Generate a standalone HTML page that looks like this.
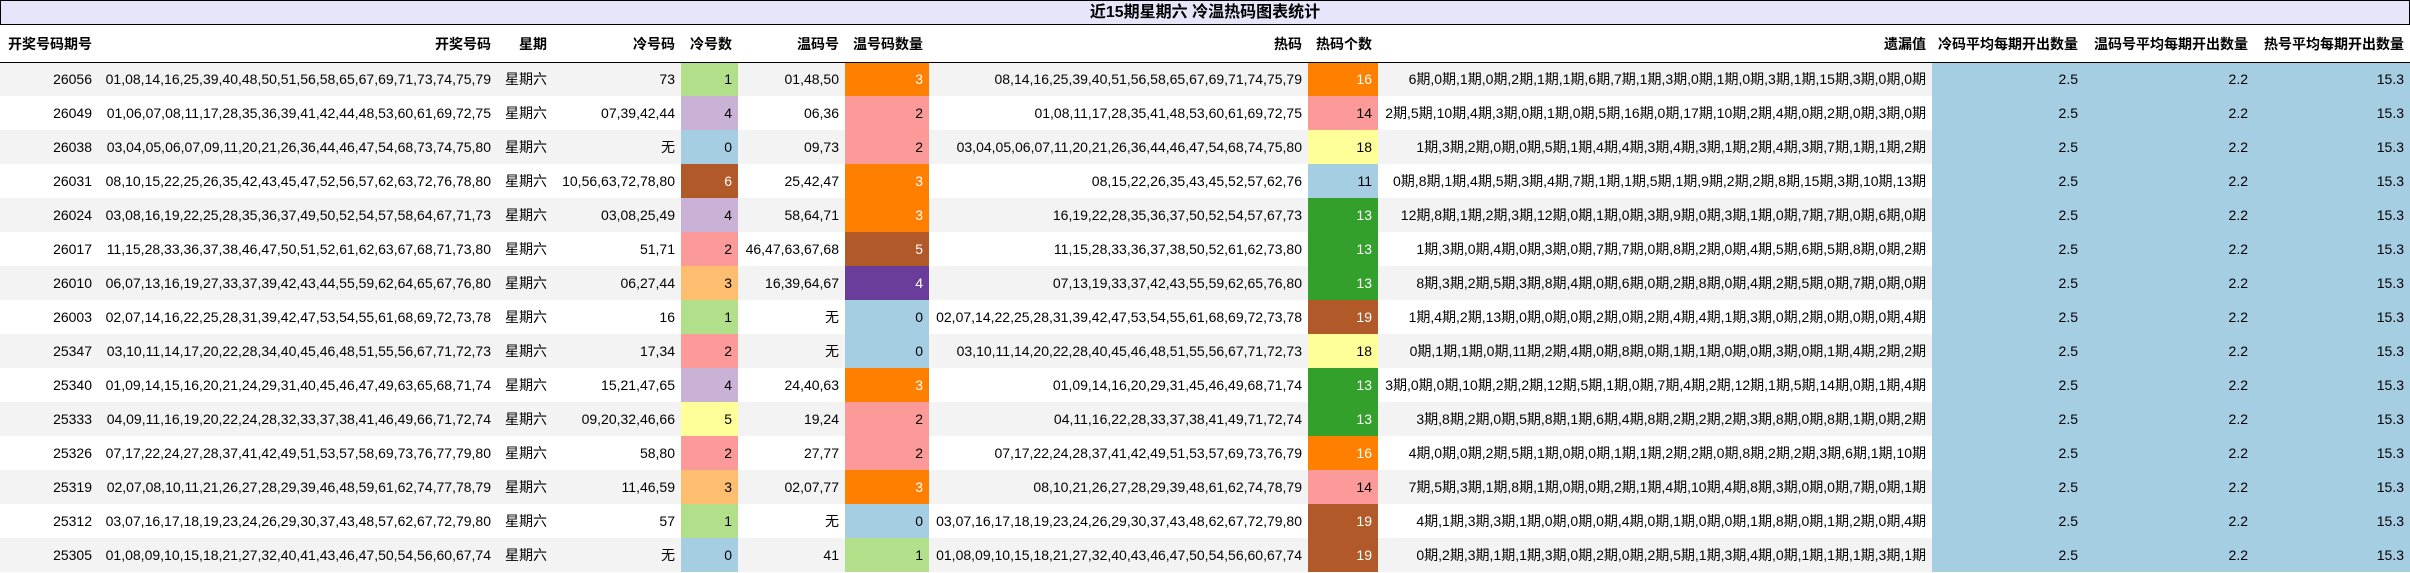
<!DOCTYPE html>
<html><head><meta charset="utf-8"><style>
*{margin:0;padding:0;box-sizing:border-box}
body{width:2410px;height:573px;background:#fff;font-family:"Liberation Sans","Noto Sans CJK SC",sans-serif;font-size:14px;color:#000;overflow:hidden}
.title{height:25px;border:1px solid #000;background:#e6e6fa;text-align:center;font-weight:bold;font-size:16px;line-height:23px}
table{border-collapse:collapse;table-layout:fixed;width:2410px}
th,td{text-align:right;padding:0 6px 0 0;white-space:nowrap;overflow:hidden}
th{height:37px;font-weight:bold;border-bottom:1px solid #000;padding-top:2px}
td{height:34px}
tbody tr:nth-child(odd) td{background:#f3f3f3}
tbody tr td.b{background:#a6cee3}
td.w{color:#fff}
</style></head><body>
<div class="title">近15期星期六 冷温热码图表统计</div>
<table>
<colgroup><col style="width:98px"><col style="width:399px"><col style="width:56px"><col style="width:128px"><col style="width:57px"><col style="width:107px"><col style="width:84px"><col style="width:379px"><col style="width:70px"><col style="width:554px"><col style="width:152px"><col style="width:170px"><col style="width:156px"></colgroup>
<thead><tr><th>开奖号码期号</th><th>开奖号码</th><th>星期</th><th>冷号码</th><th>冷号数</th><th>温码号</th><th>温号码数量</th><th>热码</th><th>热码个数</th><th>遗漏值</th><th>冷码平均每期开出数量</th><th>温码号平均每期开出数量</th><th>热号平均每期开出数量</th></tr></thead>
<tbody>
<tr><td>26056</td><td>01,08,14,16,25,39,40,48,50,51,56,58,65,67,69,71,73,74,75,79</td><td>星期六</td><td>73</td><td style="background:#b2df8a!important">1</td><td>01,48,50</td><td class="w" style="background:#ff7f00!important">3</td><td>08,14,16,25,39,40,51,56,58,65,67,69,71,74,75,79</td><td class="w" style="background:#ff7f00!important">16</td><td>6期,0期,1期,0期,2期,1期,1期,6期,7期,1期,3期,0期,1期,0期,3期,1期,15期,3期,0期,0期</td><td class="b">2.5</td><td class="b">2.2</td><td class="b">15.3</td></tr>
<tr><td>26049</td><td>01,06,07,08,11,17,28,35,36,39,41,42,44,48,53,60,61,69,72,75</td><td>星期六</td><td>07,39,42,44</td><td style="background:#cab2d6">4</td><td>06,36</td><td style="background:#fb9a99">2</td><td>01,08,11,17,28,35,41,48,53,60,61,69,72,75</td><td style="background:#fb9a99">14</td><td>2期,5期,10期,4期,3期,0期,1期,0期,5期,16期,0期,17期,10期,2期,4期,0期,2期,0期,3期,0期</td><td class="b">2.5</td><td class="b">2.2</td><td class="b">15.3</td></tr>
<tr><td>26038</td><td>03,04,05,06,07,09,11,20,21,26,36,44,46,47,54,68,73,74,75,80</td><td>星期六</td><td>无</td><td style="background:#a6cee3!important">0</td><td>09,73</td><td style="background:#fb9a99!important">2</td><td>03,04,05,06,07,11,20,21,26,36,44,46,47,54,68,74,75,80</td><td style="background:#ffff99!important">18</td><td>1期,3期,2期,0期,0期,5期,1期,4期,4期,3期,4期,3期,1期,2期,4期,3期,7期,1期,1期,2期</td><td class="b">2.5</td><td class="b">2.2</td><td class="b">15.3</td></tr>
<tr><td>26031</td><td>08,10,15,22,25,26,35,42,43,45,47,52,56,57,62,63,72,76,78,80</td><td>星期六</td><td>10,56,63,72,78,80</td><td class="w" style="background:#b15928">6</td><td>25,42,47</td><td class="w" style="background:#ff7f00">3</td><td>08,15,22,26,35,43,45,52,57,62,76</td><td style="background:#a6cee3">11</td><td>0期,8期,1期,4期,5期,3期,4期,7期,1期,1期,5期,1期,9期,2期,2期,8期,15期,3期,10期,13期</td><td class="b">2.5</td><td class="b">2.2</td><td class="b">15.3</td></tr>
<tr><td>26024</td><td>03,08,16,19,22,25,28,35,36,37,49,50,52,54,57,58,64,67,71,73</td><td>星期六</td><td>03,08,25,49</td><td style="background:#cab2d6!important">4</td><td>58,64,71</td><td class="w" style="background:#ff7f00!important">3</td><td>16,19,22,28,35,36,37,50,52,54,57,67,73</td><td class="w" style="background:#33a02c!important">13</td><td>12期,8期,1期,2期,3期,12期,0期,1期,0期,3期,9期,0期,3期,1期,0期,7期,7期,0期,6期,0期</td><td class="b">2.5</td><td class="b">2.2</td><td class="b">15.3</td></tr>
<tr><td>26017</td><td>11,15,28,33,36,37,38,46,47,50,51,52,61,62,63,67,68,71,73,80</td><td>星期六</td><td>51,71</td><td style="background:#fb9a99">2</td><td>46,47,63,67,68</td><td class="w" style="background:#b15928">5</td><td>11,15,28,33,36,37,38,50,52,61,62,73,80</td><td class="w" style="background:#33a02c">13</td><td>1期,3期,0期,4期,0期,3期,0期,7期,7期,0期,8期,2期,0期,4期,5期,6期,5期,8期,0期,2期</td><td class="b">2.5</td><td class="b">2.2</td><td class="b">15.3</td></tr>
<tr><td>26010</td><td>06,07,13,16,19,27,33,37,39,42,43,44,55,59,62,64,65,67,76,80</td><td>星期六</td><td>06,27,44</td><td style="background:#fdbf6f!important">3</td><td>16,39,64,67</td><td class="w" style="background:#6a3d9a!important">4</td><td>07,13,19,33,37,42,43,55,59,62,65,76,80</td><td class="w" style="background:#33a02c!important">13</td><td>8期,3期,2期,5期,3期,8期,4期,0期,6期,0期,2期,8期,0期,4期,2期,5期,0期,7期,0期,0期</td><td class="b">2.5</td><td class="b">2.2</td><td class="b">15.3</td></tr>
<tr><td>26003</td><td>02,07,14,16,22,25,28,31,39,42,47,53,54,55,61,68,69,72,73,78</td><td>星期六</td><td>16</td><td style="background:#b2df8a">1</td><td>无</td><td style="background:#a6cee3">0</td><td>02,07,14,22,25,28,31,39,42,47,53,54,55,61,68,69,72,73,78</td><td class="w" style="background:#b15928">19</td><td>1期,4期,2期,13期,0期,0期,0期,2期,0期,2期,4期,4期,1期,3期,0期,2期,0期,0期,0期,4期</td><td class="b">2.5</td><td class="b">2.2</td><td class="b">15.3</td></tr>
<tr><td>25347</td><td>03,10,11,14,17,20,22,28,34,40,45,46,48,51,55,56,67,71,72,73</td><td>星期六</td><td>17,34</td><td style="background:#fb9a99!important">2</td><td>无</td><td style="background:#a6cee3!important">0</td><td>03,10,11,14,20,22,28,40,45,46,48,51,55,56,67,71,72,73</td><td style="background:#ffff99!important">18</td><td>0期,1期,1期,0期,11期,2期,4期,0期,8期,0期,1期,1期,0期,0期,3期,0期,1期,4期,2期,2期</td><td class="b">2.5</td><td class="b">2.2</td><td class="b">15.3</td></tr>
<tr><td>25340</td><td>01,09,14,15,16,20,21,24,29,31,40,45,46,47,49,63,65,68,71,74</td><td>星期六</td><td>15,21,47,65</td><td style="background:#cab2d6">4</td><td>24,40,63</td><td class="w" style="background:#ff7f00">3</td><td>01,09,14,16,20,29,31,45,46,49,68,71,74</td><td class="w" style="background:#33a02c">13</td><td>3期,0期,0期,10期,2期,2期,12期,5期,1期,0期,7期,4期,2期,12期,1期,5期,14期,0期,1期,4期</td><td class="b">2.5</td><td class="b">2.2</td><td class="b">15.3</td></tr>
<tr><td>25333</td><td>04,09,11,16,19,20,22,24,28,32,33,37,38,41,46,49,66,71,72,74</td><td>星期六</td><td>09,20,32,46,66</td><td style="background:#ffff99!important">5</td><td>19,24</td><td style="background:#fb9a99!important">2</td><td>04,11,16,22,28,33,37,38,41,49,71,72,74</td><td class="w" style="background:#33a02c!important">13</td><td>3期,8期,2期,0期,5期,8期,1期,6期,4期,8期,2期,2期,2期,3期,8期,0期,8期,1期,0期,2期</td><td class="b">2.5</td><td class="b">2.2</td><td class="b">15.3</td></tr>
<tr><td>25326</td><td>07,17,22,24,27,28,37,41,42,49,51,53,57,58,69,73,76,77,79,80</td><td>星期六</td><td>58,80</td><td style="background:#fb9a99">2</td><td>27,77</td><td style="background:#fb9a99">2</td><td>07,17,22,24,28,37,41,42,49,51,53,57,69,73,76,79</td><td class="w" style="background:#ff7f00">16</td><td>4期,0期,0期,2期,5期,1期,0期,0期,1期,1期,2期,2期,0期,8期,2期,2期,3期,6期,1期,10期</td><td class="b">2.5</td><td class="b">2.2</td><td class="b">15.3</td></tr>
<tr><td>25319</td><td>02,07,08,10,11,21,26,27,28,29,39,46,48,59,61,62,74,77,78,79</td><td>星期六</td><td>11,46,59</td><td style="background:#fdbf6f!important">3</td><td>02,07,77</td><td class="w" style="background:#ff7f00!important">3</td><td>08,10,21,26,27,28,29,39,48,61,62,74,78,79</td><td style="background:#fb9a99!important">14</td><td>7期,5期,3期,1期,8期,1期,0期,0期,2期,1期,4期,10期,4期,8期,3期,0期,0期,7期,0期,1期</td><td class="b">2.5</td><td class="b">2.2</td><td class="b">15.3</td></tr>
<tr><td>25312</td><td>03,07,16,17,18,19,23,24,26,29,30,37,43,48,57,62,67,72,79,80</td><td>星期六</td><td>57</td><td style="background:#b2df8a">1</td><td>无</td><td style="background:#a6cee3">0</td><td>03,07,16,17,18,19,23,24,26,29,30,37,43,48,62,67,72,79,80</td><td class="w" style="background:#b15928">19</td><td>4期,1期,3期,3期,1期,0期,0期,0期,4期,0期,1期,0期,0期,1期,8期,0期,1期,2期,0期,4期</td><td class="b">2.5</td><td class="b">2.2</td><td class="b">15.3</td></tr>
<tr><td>25305</td><td>01,08,09,10,15,18,21,27,32,40,41,43,46,47,50,54,56,60,67,74</td><td>星期六</td><td>无</td><td style="background:#a6cee3!important">0</td><td>41</td><td style="background:#b2df8a!important">1</td><td>01,08,09,10,15,18,21,27,32,40,43,46,47,50,54,56,60,67,74</td><td class="w" style="background:#b15928!important">19</td><td>0期,2期,3期,1期,1期,3期,0期,2期,0期,2期,5期,1期,3期,4期,0期,1期,1期,1期,3期,1期</td><td class="b">2.5</td><td class="b">2.2</td><td class="b">15.3</td></tr>
</tbody></table>
</body></html>
